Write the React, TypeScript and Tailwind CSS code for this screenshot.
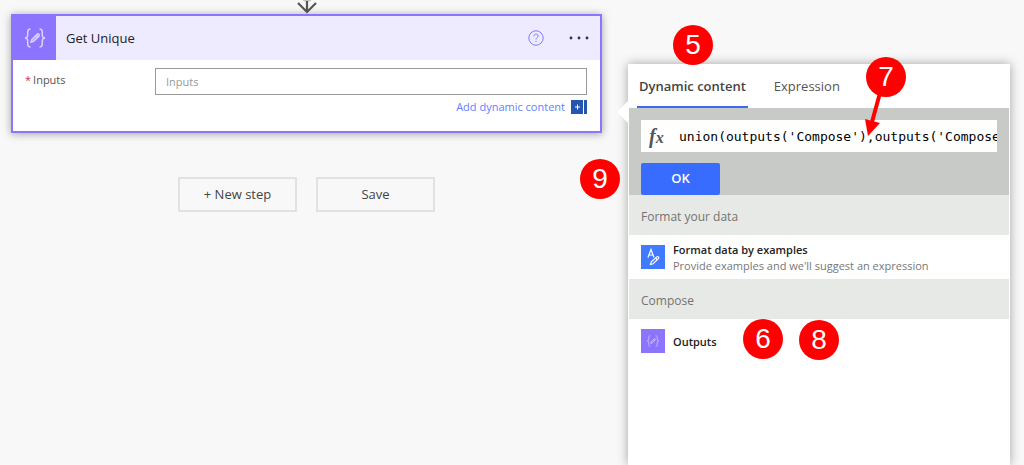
import React, { useState } from 'react';

type Callout = {
  label: string;
  position: string;
};

type IconProps = {
  className?: string;
};

const callouts: Callout[] = [
  { label: '5', position: 'left-[44px] top-[-39px]' },
  { label: '7', position: 'left-[237px] top-[-7px]' },
  { label: '9', position: 'left-[-49px] top-[95px]' },
  { label: '6', position: 'left-[114px] top-[255px]' },
  { label: '8', position: 'left-[170px] top-[256px]' },
];

const tabs = ['Dynamic content', 'Expression'];

const ComposeIcon: React.FC<IconProps> = ({ className }) => (
  <svg viewBox="0 0 24 20" className={className} fill="none" stroke="currentColor" strokeWidth="1.500" aria-hidden="true">
    <path d="M7.500 1C5 1 4.700 2.200 4.700 4v3c0 1.800-.8 3-2.800 3 2 0 2.800 1.200 2.800 3v3c0 1.800.3 3 2.800 3" />
    <path d="M16.500 1c2.500 0 2.800 1.200 2.800 3v3c0 1.800.8 3 2.800 3-2 0-2.800 1.200-2.800 3v3c0 1.800-.3 3-2.800 3" />
    <path d="M8 14.200l.8-2.600 5.300-5.300c.6-.6 1.300-.5 1.800 0s.6 1.200 0 1.800l-5.300 5.300z" fill="currentColor" fillOpacity="0.4" />
    <path d="M13 7.400l1.900 1.900" />
  </svg>
);

const FormatIcon: React.FC<IconProps> = ({ className }) => (
  <svg viewBox="0 0 24 24" className={className} fill="none" stroke="currentColor" strokeWidth="1.200" aria-hidden="true">
    <path d="M7 12.500L10 4.500l3 8M8 10h4" />
    <path d="M9.500 19.500l.8-2.600 5.500-5c.6-.5 1.300-.4 1.700 0s.4 1.100-.1 1.700l-5.300 5.200z" />
    <path d="M14.600 13l1.800 1.800" />
  </svg>
);

const HelpIcon: React.FC<IconProps> = ({ className }) => (
  <svg viewBox="0 0 16 16" className={className} fill="none" stroke="currentColor" aria-hidden="true">
    <circle cx="8" cy="8" r="7.200" />
    <path d="M5.900 6.300c0-1.300.9-2.200 2.100-2.200s2.100.8 2.100 1.900c0 1.600-2.100 1.700-2.100 3.500" />
    <path d="M8 10.900v1.200" />
  </svg>
);

const StepCard: React.FC = () => (
  <article className="border-2 border-[#8c74ff] bg-white shadow-[0_1px_8px_rgba(0,0,0,0.35)]">
    <header className="flex h-11 items-center bg-[#eeeaff]">
      <div className="flex h-full w-[43px] items-center justify-center bg-[#8c74ff] text-[#d9d2ff]">
        <ComposeIcon className="h-5 w-6" />
      </div>
      <h2 className="flex-1 pl-[10px] text-[13px] leading-5 text-[#222]">Get Unique</h2>
      <button type="button" aria-label="Help" className="text-[#7a7dff]">
        <HelpIcon className="size-4" />
      </button>
      <button type="button" aria-label="More" className="mr-[10px] ml-6">
        <svg viewBox="0 0 22 4" className="h-1 w-[22px]" fill="#33303f" aria-hidden="true">
          <circle cx="3" cy="2" r="1.400" />
          <circle cx="11" cy="2" r="1.400" />
          <circle cx="19" cy="2" r="1.400" />
        </svg>
      </button>
    </header>
    <div className="pt-2 pr-[13px] pb-4 pl-3">
      <div className="flex">
        <label htmlFor="inputs" className="w-[130px] pt-1 text-[11px] leading-4 text-[#555]">
          <span className="mr-0.5 text-[#d13438]">*</span>
          Inputs
        </label>
        <input
          id="inputs"
          placeholder="Inputs"
          className="h-[27px] min-w-0 flex-1 border border-[#999] bg-white px-[10px] text-[11px] text-[#333] outline-none placeholder:text-[#999]"
        />
      </div>
      <div className="flex items-center justify-end gap-[6px] pt-1">
        <a href="#dynamic" className="text-[11px] leading-4 text-[#5f7fff]">Add dynamic content</a>
        <button type="button" aria-label="Toggle dynamic content">
          <svg viewBox="0 0 16 14" className="h-[14px] w-4" aria-hidden="true">
            <path d="M0 0h12v14H0zM13 0h3v14h-3z" fill="#2456b0" />
            <path d="M6.500 4.500v5M4 7h5" stroke="#fff" />
          </svg>
        </button>
      </div>
    </div>
  </article>
);

const SectionTitle: React.FC<{ children: React.ReactNode }> = ({ children }) => (
  <h3 className="flex h-10 items-center bg-[#e7e9e6] px-3 pt-1 text-xs text-[#737373]">{children}</h3>
);

const DynamicPanel: React.FC = () => {
  const [active, setActive] = useState(tabs[0]);
  const [expression, setExpression] = useState("union(outputs('Compose'),outputs('Compose'))");

  return (
    <aside id="dynamic" className="relative mt-16 mr-[14px] w-[382px] shrink-0 border-x border-white bg-white shadow-[0_0_10px_rgba(0,0,0,0.35)]">
      {/* Pointer towards the edited field */}
      <div className="absolute top-9 left-[-12px] h-6 w-3 bg-white [clip-path:polygon(100%_0,100%_100%,0_50%)]" />

      <nav className="flex h-11 gap-4 px-2">
        {tabs.map((tab) => (
          <button
            key={tab}
            type="button"
            onClick={() => setActive(tab)}
            className={`border-b-2 px-[2px] pt-1 text-[13px] ${active === tab ? 'border-[#3f69e8] font-semibold text-[#444]' : 'ml-2 border-transparent text-[#555]'}`}
          >
            {tab}
          </button>
        ))}
      </nav>

      <form className="bg-[#c8cac7] px-3 pt-3" onSubmit={(e) => e.preventDefault()}>
        <div className="flex h-8 items-center bg-white">
          <label htmlFor="expression" className="w-[38px] pl-2 font-['Liberation_Serif',serif] text-xl font-bold text-[#555] italic">
            f<sub className="bottom-0 text-base">x</sub>
          </label>
          <input
            id="expression"
            value={expression}
            onChange={(e) => setExpression(e.target.value)}
            className="h-full min-w-0 flex-1 font-['DejaVu_Sans_Mono',monospace] text-[13px] text-black outline-none"
          />
        </div>
        <button type="submit" className="mt-[11px] block h-8 w-[79px] rounded-[2px] bg-[#376cff] text-[13px] font-semibold text-white">
          OK
        </button>
      </form>

      <SectionTitle>Format your data</SectionTitle>
      <button type="button" className="flex h-11 w-full items-center gap-2 px-3 text-left">
        <span className="bg-[#407aff] text-white">
          <FormatIcon className="size-6" />
        </span>
        <span className="pt-0.5 text-[11px] leading-4 text-[#777]">
          <span className="block font-semibold text-[#222]">Format data by examples</span>
          Provide examples and we'll suggest an expression
        </span>
      </button>

      <SectionTitle>Compose</SectionTitle>
      <button type="button" className="flex h-11 w-full items-center gap-2 px-3 text-left">
        <span className="flex size-6 items-center justify-center bg-[#8c74ff] text-[#c9beff]">
          <ComposeIcon className="h-3 w-[14px]" />
        </span>
        <span className="pt-0.5 text-[11px] font-semibold text-[#222]">Outputs</span>
      </button>

      {/* Numbered callouts */}
      <svg viewBox="0 0 20 50" className="pointer-events-none absolute top-[24px] left-[234px] h-[50px] w-5" aria-hidden="true">
        <path d="M17 5L9 34" stroke="#f00" strokeWidth="4" />
        <path d="M2 31l15 4L5 48z" fill="#f00" />
      </svg>
      {callouts.map((c) => (
        <span
          key={c.label}
          className={`absolute flex size-10 items-center justify-center rounded-full bg-[#f00] font-['Liberation_Sans',Arial,sans-serif] text-[28px] leading-none text-white ${c.position}`}
        >
          {c.label}
        </span>
      ))}
    </aside>
  );
};

const App: React.FC = () => (
  <main className="flex h-screen overflow-hidden bg-[#f8f8f8] font-['Open_Sans','Segoe_UI',sans-serif]">
    <section className="min-w-0 flex-1 pr-[26px] pl-[11px]">
      <svg viewBox="0 0 20 14" className="mx-auto h-[14px] w-5" fill="none" stroke="#555" strokeWidth="2.200" aria-hidden="true">
        <circle cx="10" cy="-4" r="6" fill="#c4c4c4" stroke="none" />
        <path d="M10 1v11M1 3l9 9 9-9" />
      </svg>
      <StepCard />
      <div className="mt-11 flex justify-center gap-[19px] text-[13px] text-[#444]">
        <button type="button" className="h-[35px] w-[119px] border-2 border-[#e2e2e2]">+ New step</button>
        <button type="button" className="h-[35px] w-[119px] border-2 border-[#e2e2e2]">Save</button>
      </div>
    </section>
    <DynamicPanel />
  </main>
);

export default App;
